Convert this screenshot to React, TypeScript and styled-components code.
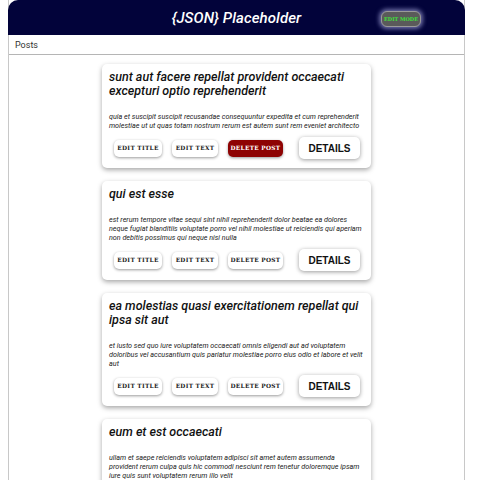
import React from "react";
import styled, { createGlobalStyle } from "styled-components";

const Global = createGlobalStyle`
  body { margin: 0; background: #ffffff; font-family: Roboto, "Liberation Sans", sans-serif; }
`;

const Page = styled.div`
  margin: 0 15px 0 8px;
  border-left: 1px solid #c8c8c8;
  border-right: 1px solid #c8c8c8;
  min-height: 480px;
`;

const Header = styled.header`
  height: 35px;
  background: #02033a;
  border-radius: 10px 10px 0 0;
  display: flex;
  align-items: center;
  position: relative;
  justify-content: center;
  margin: 0 -1px;
`;

const Title = styled.h1`
  margin: 0;
  color: #ffffff;
  font-family: Roboto, sans-serif;
  font-style: italic;
  font-weight: 500;
  font-size: 15px;
  letter-spacing: 0.1px;
`;

const EditMode = styled.button`
  position: absolute;
  right: 44px;
  top: 11px;
  width: 40px;
  height: 16px;
  border-radius: 6px;
  border: 1px solid #9a9a9a;
  background: #5a5a5a;
  color: #3fe03a;
  font-family: "DejaVu Serif", serif;
  font-weight: bold;
  font-size: 5px;
  padding: 0;
  box-shadow: 0 0 4px 2px rgba(200, 200, 255, 0.55);
`;

const SubBar = styled.div`
  height: 19px;
  border-bottom: 1px solid #b5b5b5;
  display: flex;
  align-items: center;
  padding-left: 6px;
  font-size: 9px;
  color: #333;
`;

const List = styled.div`
  display: flex;
  flex-direction: column;
  align-items: center;
  gap: 13px;
  padding: 9px 0 0 0;
`;

const Card = styled.div`
  width: 269px;
  box-sizing: border-box;
  padding: 6px 8px 9px 7px;
  border-radius: 5px;
  background: #fff;
  box-shadow: 0 2px 5px rgba(0, 0, 0, 0.35);
`;

const PostTitle = styled.h2`
  margin: 0;
  font-style: italic;
  font-weight: 500;
  font-size: 12.5px;
  line-height: 14px;
  color: #111;
`;

const Body = styled.p`
  margin: 14px 0 0 0;
  font-style: italic;
  font-size: 7.2px;
  line-height: 9px;
  color: #222;
`;

const Row = styled.div`
  display: flex;
  align-items: center;
  margin-top: 7px;
  padding-left: 5px;
`;

const SmallBtn = styled.button<{ $w: number; $danger?: boolean }>`
  width: ${(p) => p.$w}px;
  height: 17px;
  margin-right: 10px;
  border: none;
  border-radius: 5px;
  padding: 0;
  background: ${(p) => (p.$danger ? "#8e0303" : "#fff")};
  color: ${(p) => (p.$danger ? "#fff" : "#222")};
  box-shadow: 0 1px 3px rgba(0, 0, 0, 0.4);
  font-family: "DejaVu Serif", serif;
  font-weight: bold;
  font-size: 5.8px;
  letter-spacing: 0.3px;
`;

const Details = styled.button`
  margin-left: 6px;
  width: 61px;
  height: 22px;
  border: none;
  border-radius: 5px;
  background: #fff;
  box-shadow: 0 1px 4px rgba(0, 0, 0, 0.4);
  font-family: "Liberation Sans", Arial, sans-serif;
  font-weight: bold;
  font-size: 10px;
  color: #111;
  padding: 0;
`;

const posts = [
  {
    title: "sunt aut facere repellat provident occaecati excepturi optio reprehenderit",
    body: "quia et suscipit suscipit recusandae consequuntur expedita et cum reprehenderit molestiae ut ut quas totam nostrum rerum est autem sunt rem eveniet architecto",
    active: true,
  },
  {
    title: "qui est esse",
    body: "est rerum tempore vitae sequi sint nihil reprehenderit dolor beatae ea dolores neque fugiat blanditiis voluptate porro vel nihil molestiae ut reiciendis qui aperiam non debitis possimus qui neque nisi nulla",
  },
  {
    title: "ea molestias quasi exercitationem repellat qui ipsa sit aut",
    body: "et iusto sed quo iure voluptatem occaecati omnis eligendi aut ad voluptatem doloribus vel accusantium quis pariatur molestiae porro eius odio et labore et velit aut",
  },
  {
    title: "eum et est occaecati",
    body: "ullam et saepe reiciendis voluptatem adipisci sit amet autem assumenda provident rerum culpa quis hic commodi nesciunt rem tenetur doloremque ipsam iure quis sunt voluptatem rerum illo velit",
  },
];

export default function App() {
  return (
    <>
      <Global />
      <Page>
        <Header>
          <Title>{"{JSON} Placeholder"}</Title>
          <EditMode>EDIT MODE</EditMode>
        </Header>
        <SubBar>Posts</SubBar>
        <List>
          {posts.map((p, i) => (
            <Card key={i}>
              <PostTitle>{p.title}</PostTitle>
              <Body>{p.body}</Body>
              <Row>
                <SmallBtn $w={48}>EDIT TITLE</SmallBtn>
                <SmallBtn $w={46}>EDIT TEXT</SmallBtn>
                <SmallBtn $w={55} $danger={p.active}>DELETE POST</SmallBtn>
                <Details>DETAILS</Details>
              </Row>
            </Card>
          ))}
        </List>
      </Page>
    </>
  );
}
